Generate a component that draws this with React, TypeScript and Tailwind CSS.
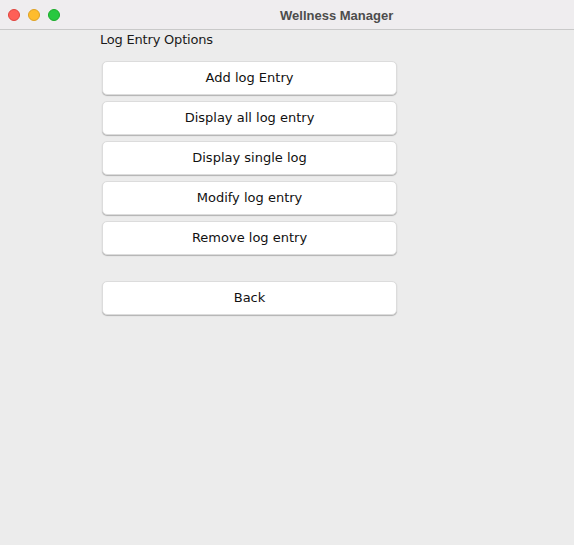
export default function App() {
  const options = [
    'Add log Entry',
    'Display all log entry',
    'Display single log',
    'Modify log entry',
    'Remove log entry',
  ]

  return (
    <div className="w-[574px] h-[545px] bg-[#ececec] flex flex-col overflow-hidden font-['DejaVu_Sans',sans-serif]">
      {/* title bar */}
      <div className="relative h-[30px] shrink-0 bg-[#efedef] border-b border-[#c9c9c9] flex items-center">
        <div className="flex gap-2 pl-2">
          <span className="w-3 h-3 rounded-full bg-[#fe5f57] border border-[#e0443e]"></span>
          <span className="w-3 h-3 rounded-full bg-[#febc2e] border border-[#dea123]"></span>
          <span className="w-3 h-3 rounded-full bg-[#28c840] border border-[#1aab29]"></span>
        </div>
        <div className="absolute left-[280px] top-[6px] text-[13px] font-bold text-[#4c4c4c] font-['Liberation_Sans',sans-serif]">
          Wellness Manager
        </div>
      </div>

      {/* content */}
      <div className="pl-[100px] pt-[1px]">
        <p className="text-[13px] tracking-[-0.2px] leading-[18px] text-[#1a1a1a] h-[18px]">Log Entry Options</p>
        <div className="flex flex-col gap-[6px] pl-[2px] pt-[12px] w-[297px]">
          {options.map((o) => (
            <button
              key={o}
              className="h-[34px] w-[295px] bg-white rounded-[5px] border-[0.5px] border-[#dcdcdc] shadow-[0_1px_1px_rgba(0,0,0,0.25)] text-[13px] text-[#111]"
            >
              {o}
            </button>
          ))}
          <button className="mt-[20px] h-[34px] w-[295px] bg-white rounded-[5px] border-[0.5px] border-[#dcdcdc] shadow-[0_1px_1px_rgba(0,0,0,0.25)] text-[13px] text-[#111]">
            Back
          </button>
        </div>
      </div>
    </div>
  )
}
